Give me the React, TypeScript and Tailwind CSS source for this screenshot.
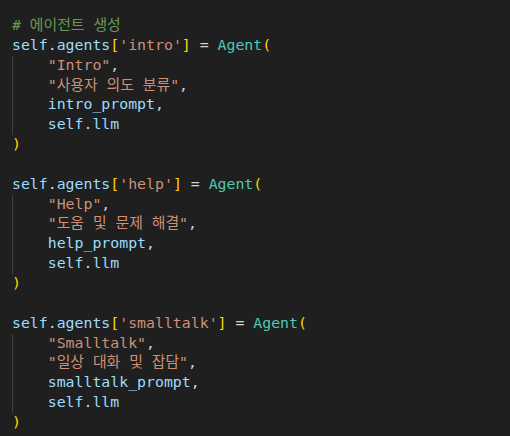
import React from "react";

const C = {
  comment: "text-[#6a9955]",
  variable: "text-[#9cdcfe]",
  string: "text-[#ce9178]",
  cls: "text-[#4ec9b0]",
  bracket: "text-[#ffd700]",
  plain: "text-[#d4d4d4]",
};

const agents = [
  { key: "intro", name: "Intro", desc: "사용자 의도 분류", prompt: "intro_prompt" },
  { key: "help", name: "Help", desc: "도움 및 문제 해결", prompt: "help_prompt" },
  { key: "smalltalk", name: "Smalltalk", desc: "일상 대화 및 잡담", prompt: "smalltalk_prompt" },
];

const Line = ({ children }: { children?: React.ReactNode }) => (
  <div className="h-[19.85px] whitespace-pre">{children ?? " "}</div>
);

const AgentBlock = ({
  agentKey,
  name,
  desc,
  prompt,
}: {
  agentKey: string;
  name: string;
  desc: string;
  prompt: string;
}) => (
  <div>
    <Line>
      <span className={C.variable}>self</span>
      <span className={C.plain}>.</span>
      <span className={C.variable}>agents</span>
      <span className={C.bracket}>[</span>
      <span className={C.string}>'{agentKey}'</span>
      <span className={C.bracket}>]</span>
      <span className={C.plain}> = </span>
      <span className={C.cls}>Agent</span>
      <span className={C.bracket}>(</span>
    </Line>
    <div className="border-l border-[#404040] pl-[calc(4ch-1px)]">
      <Line>
        <span className={C.string}>"{name}"</span>
        <span className={C.plain}>,</span>
      </Line>
      <Line>
        <span className={C.string}>"{desc}"</span>
        <span className={C.plain}>,</span>
      </Line>
      <Line>
        <span className={C.variable}>{prompt}</span>
        <span className={C.plain}>,</span>
      </Line>
      <Line>
        <span className={C.variable}>self</span>
        <span className={C.plain}>.</span>
        <span className={C.variable}>llm</span>
      </Line>
    </div>
    <Line>
      <span className={C.bracket}>)</span>
    </Line>
  </div>
);

export default function App() {
  return (
    <div
      className="w-[510px] h-[436px] overflow-hidden bg-[#1f1f1f] pt-[16px] pl-[12px] text-[14.85px] leading-[19.85px]"
      style={{ fontFamily: '"DejaVu Sans Mono", "Noto Sans CJK KR", monospace' }}
    >
      <Line>
        <span className={C.comment}># 에이전트 생성</span>
      </Line>
      {agents.map((a, i) => (
        <div key={a.key}>
          {i > 0 && <Line />}
          <AgentBlock agentKey={a.key} name={a.name} desc={a.desc} prompt={a.prompt} />
        </div>
      ))}
    </div>
  );
}
